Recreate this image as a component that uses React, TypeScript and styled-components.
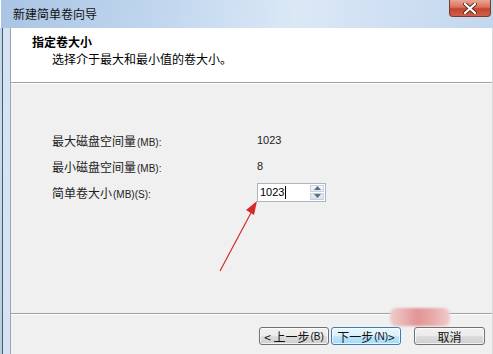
import React from 'react';
import styled, { createGlobalStyle } from 'styled-components';

const GlobalStyle = createGlobalStyle`
    html, body {
        margin: 0;
        padding: 0;
        overflow: hidden;
        background: #ffffff;
    }
    * {
        box-sizing: border-box;
    }
`;

const FONT = `"SimSun", "Noto Sans CJK SC", "DejaVu Sans", sans-serif`;

const rows = [
    { label: '最大磁盘空间量', unit: '(MB):', value: '1023' },
    { label: '最小磁盘空间量', unit: '(MB):', value: '8' },
];

const App = () => {
    return (
        <>
            <GlobalStyle />
            <Window>
                <TitleBar>
                    <Title>新建简单卷向导</Title>
                    <CloseButton aria-label="关闭">
                        <svg width="14" height="11" viewBox="0 0 14 11">
                            <path d="M2 1 L12 10 M12 1 L2 10" stroke="#5a2a20" strokeWidth="4" strokeLinecap="round" />
                            <path d="M2 1 L12 10 M12 1 L2 10" stroke="#ffffff" strokeWidth="2.2" strokeLinecap="round" />
                        </svg>
                    </CloseButton>
                </TitleBar>
                <Frame>
                    <Client>
                        <Header>
                            <HeaderTitle>指定卷大小</HeaderTitle>
                            <HeaderSub>选择介于最大和最小值的卷大小。</HeaderSub>
                        </Header>
                        <Content>
                            <Grid>
                                {rows.map((r) => (
                                    <React.Fragment key={r.label}>
                                        <Label>
                                            {r.label}
                                            <Latin>{r.unit}</Latin>
                                        </Label>
                                        <Value>{r.value}</Value>
                                    </React.Fragment>
                                ))}
                                <Label>
                                    简单卷大小<Latin>(MB)(S):</Latin>
                                </Label>
                                <Spinner>
                                    <SpinInput>
                                        1023<Caret />
                                    </SpinInput>
                                    <SpinButtons>
                                        <SpinHalf>
                                            <svg width="7" height="4" viewBox="0 0 7 4"><path d="M0 4 L3.5 0 L7 4 Z" fill="#5d6b7c" /></svg>
                                        </SpinHalf>
                                        <SpinHalf $bottom>
                                            <svg width="7" height="4" viewBox="0 0 7 4"><path d="M0 0 L3.5 4 L7 0 Z" fill="#5d6b7c" /></svg>
                                        </SpinHalf>
                                    </SpinButtons>
                                </Spinner>
                            </Grid>
                        </Content>
                        <Footer>
                            <Button>&lt; 上一步<Latin>(B)</Latin></Button>
                            <Button $primary>下一步<Latin>(N)</Latin> &gt;</Button>
                            <Button $wide>取消</Button>
                        </Footer>
                    </Client>
                </Frame>
                <Arrow width="60" height="80" viewBox="0 0 60 80">
                    <path d="M4 76 L36 16" stroke="#d42a2a" strokeWidth="1.2" />
                    <path d="M41 6 L30 15 L38 20 Z" fill="#d42a2a" />
                </Arrow>
                <Smudge />
            </Window>
        </>
    );
};

const Window = styled.div`
    position: relative;
    width: 493px;
    height: 354px;
    display: flex;
    flex-direction: column;
    background: linear-gradient(180deg, #bcd3ec 0%, #c9dcf0 40%, #b6cde6 100%);
    font-family: ${FONT};
    font-size: 12px;
    color: #000;
    overflow: hidden;
`;

const TitleBar = styled.div`
    height: 28px;
    display: flex;
    align-items: flex-start;
    justify-content: space-between;
    padding-left: 12px;
    background: linear-gradient(100deg, #a9c4e4 0%, #c3d8ef 35%, #dbe8f6 60%, #c2d6ee 100%);
    border-left: 1px solid #ffffff;
`;

const Title = styled.span`
    margin-top: 7px;
    font-size: 12px;
    line-height: 14px;
    color: #111;
`;

const CloseButton = styled.div`
    width: 42px;
    height: 17px;
    margin-right: 2px;
    display: flex;
    align-items: center;
    justify-content: center;
    border: 1px solid #7a3a30;
    border-top: none;
    border-radius: 0 0 4px 4px;
    background: linear-gradient(180deg, #e9a694 0%, #d9705a 45%, #c4432e 55%, #d1604a 100%);
`;

const Frame = styled.div`
    flex: 1;
    display: flex;
    margin-left: 2px;
    border-left: 1px solid #4c5868;
    padding-left: 7px;
    background: linear-gradient(90deg, #d5e3f3, #c2d6ec);
`;

const Client = styled.div`
    flex: 1;
    display: flex;
    flex-direction: column;
    background: #f0f0f0;
    border-left: 1px solid #98a4b4;
    border-right: 1px solid #d8d8d8;
`;

const Header = styled.div`
    height: 55px;
    background: #ffffff;
    border-bottom: 1px solid #a0a0a0;
    box-shadow: 0 1px 0 #ffffff;
    padding: 7px 0 0 21px;
`;

const HeaderTitle = styled.div`
    font-weight: bold;
    font-size: 12px;
    line-height: 14px;
`;

const HeaderSub = styled.div`
    padding-left: 20px;
    margin-top: 3px;
    font-size: 12px;
    line-height: 14px;
`;

const Content = styled.div`
    flex: 1;
    padding: 44px 0 0 41px;
`;

const Grid = styled.div`
    display: grid;
    grid-template-columns: 205px auto;
    grid-auto-rows: 26px;
    align-items: center;
`;

const Label = styled.span`
    font-size: 12px;
    color: #222;
`;

// half-width latin in the old bitmap look: small and tight
const Latin = styled.span`
    font-family: "Liberation Sans", Arial, sans-serif;
    font-size: 10px;
    margin-left: 1px;
`;

const Value = styled.span`
    font-family: "Liberation Sans", Arial, sans-serif;
    font-size: 11px;
    color: #222;
`;

const Spinner = styled.div`
    display: flex;
    width: 69px;
    height: 19px;
    border: 1px solid #abb6c4;
    background: #fff;
`;

const SpinInput = styled.div`
    flex: 1;
    display: flex;
    align-items: center;
    padding-left: 2px;
    font-family: "Liberation Sans", Arial, sans-serif;
    font-size: 11px;
`;

const Caret = styled.span`
    display: inline-block;
    width: 1px;
    height: 13px;
    background: #000;
    margin-left: 1px;
`;

const SpinButtons = styled.div`
    width: 16px;
    display: flex;
    flex-direction: column;
    padding: 1px;
    gap: 1px;
`;

const SpinHalf = styled.div<{ $bottom?: boolean }>`
    flex: 1;
    display: flex;
    align-items: center;
    justify-content: center;
    border: 1px solid #c8d2de;
    background: ${(p) => (p.$bottom ? 'linear-gradient(#e6ecf3, #d8e1ec)' : 'linear-gradient(#f4f7fa, #e2e9f1)')};
`;

const Footer = styled.div`
    height: 41px;
    border-top: 1px solid #a0a0a0;
    box-shadow: inset 0 1px 0 #ffffff;
    display: flex;
    justify-content: flex-end;
    padding: 13px 7px 0 0;
    gap: 2px;
`;

const Button = styled.div<{ $primary?: boolean; $wide?: boolean }>`
    height: 18px;
    width: ${(p) => (p.$wide ? '71px' : '70px')};
    margin-left: ${(p) => (p.$wide ? '11px' : '0')};
    display: flex;
    align-items: center;
    justify-content: center;
    font-size: 12px;
    color: #111;
    border: 1px solid ${(p) => (p.$primary ? '#3c7fb1' : '#707070')};
    border-radius: 3px;
    background: ${(p) =>
        p.$primary
            ? 'linear-gradient(180deg, #eaf6fd 0%, #d9f0fc 50%, #bee6fd 51%, #a7d9f5 100%)'
            : 'linear-gradient(180deg, #f2f2f2 0%, #ebebeb 50%, #dddddd 51%, #cfcfcf 100%)'};
    box-shadow: inset 0 0 0 1px rgba(255, 255, 255, 0.7);
`;

// annotation drawn over the screenshot
const Arrow = styled.svg`
    position: absolute;
    left: 216px;
    top: 195px;
    overflow: visible;
`;

// blurred watermark patch near the buttons
const Smudge = styled.div`
    position: absolute;
    left: 390px;
    top: 308px;
    width: 60px;
    height: 18px;
    border-radius: 6px;
    background: linear-gradient(90deg, #f0cccc 0%, #e8b0b0 25%, #e39494 45%, #e8a8a8 70%, #f0cdcd 100%);
    filter: blur(1px);
`;

export default App;
